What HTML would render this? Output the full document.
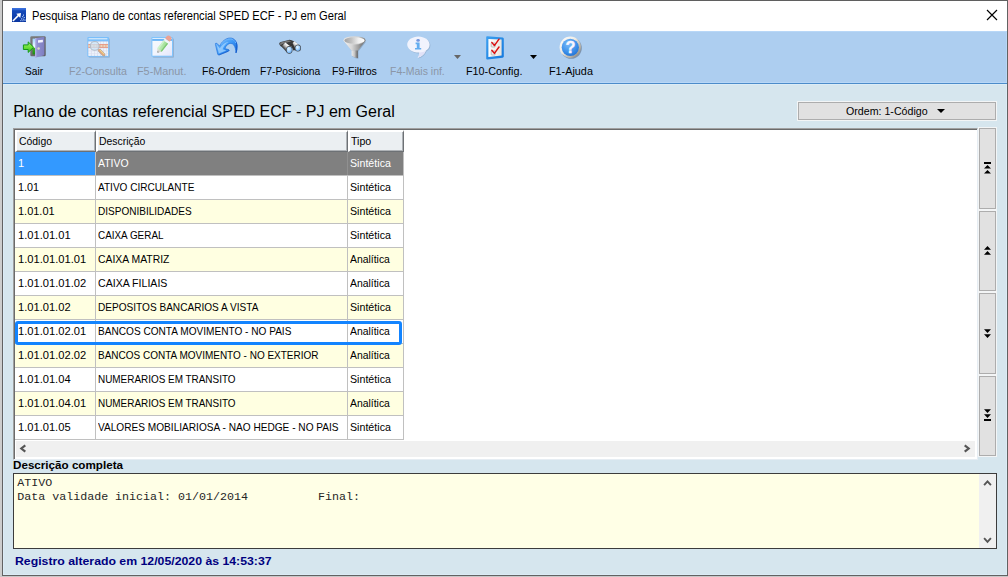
<!DOCTYPE html>
<html>
<head>
<meta charset="utf-8">
<title>Pesquisa Plano de contas referencial SPED ECF - PJ em Geral</title>
<style>
*{box-sizing:border-box;margin:0;padding:0}
html,body{width:1008px;height:577px;overflow:hidden}
body{position:relative;background:#d6e6ee;font-family:"Liberation Sans",sans-serif;font-size:11px;color:#000}
.a{position:absolute}
.t{position:absolute;white-space:pre;transform-origin:0 50%;display:block}
svg{position:absolute;overflow:visible}
/* window frame */
#fl{left:0;top:0;width:2px;height:577px;background:#cdcdcd}
#fl2{left:2px;top:0;width:1px;height:576px;background:#626262}
#ft{left:2px;top:0;width:1006px;height:1px;background:#5f5f5f}
#fr{left:1007px;top:0;width:1px;height:576px;background:#626262}
#fb{left:2px;top:575px;width:1006px;height:1px;background:#626262}
#fb2{left:0;top:576px;width:1008px;height:1px;background:#c8c8c8}
/* title bar + toolbar */
#title{left:3px;top:1px;width:1004px;height:30px;background:#fff}
#tb{left:3px;top:31px;width:1004px;height:52px;background:#adcef0;box-shadow:inset 1px 1px 0 #b8d7f7,inset -1px -1px 0 #b8d7f7}
#tbl{left:3px;top:83px;width:1004px;height:1px;background:#4c8cca}
#cb{left:3px;top:84px;width:1004px;height:491px;box-shadow:inset 1px 1px 0 #dcecf6,inset -1px -1px 0 #dcecf6}
/* ordem button */
#ord{left:798px;top:102px;width:198px;height:18px;background:#e1e1e1;border:1px solid #adadad;box-shadow:0 0 0 1px #f3f5f6}
/* grid */
#grid{left:13px;top:128px;width:965px;height:332px;background:#fff;border-left:1px solid #a0a0a0;border-top:1px solid #a0a0a0;border-right:1px solid #e6edf3;border-bottom:1px solid #e6edf3;box-shadow:inset 1px 1px 0 #6b6b6b}
.hd{top:130px;height:22px;background:#ebeff2;border-left:2px solid #fff;border-top:2px solid #fff;border-right:1px solid #6d7175;border-bottom:1px solid #6d7175;box-shadow:inset -1px -1px 0 #aeb2b6}
.r{left:15px;width:388px;height:23px;background:#fff}
.r.y{background:#ffffe1}
.vl{top:152px;width:1px;height:288px;background:#c0c0c0}
.hl{left:15px;width:389px;height:1px;background:#c0c0c0}
#s1{left:15px;top:152px;width:80px;height:23px;background:#3399ff}
#s2{left:96px;top:152px;width:307px;height:23px;background:#808080}
#focus{left:15px;top:321px;width:387px;height:24px;border:3px solid #1284ff;border-radius:3px}
#hs{left:16px;top:441px;width:959px;height:16px;background:#f0f0f0}
/* nav buttons */
.nb{left:979px;width:17px;background:#e1e1e1;border:1px solid #adadad;box-shadow:0 0 0 1px #f3f5f6}
/* text area */
#ta{left:13px;top:473px;width:984px;height:76px;background:#ffffe6;border:1px solid #3c3c3c}
#tasb{left:979px;top:474px;width:17px;height:74px;background:#f0f0f0}
</style>
</head>
<body>
<div class="a" id="fl"></div><div class="a" id="fl2"></div><div class="a" id="ft"></div>
<div class="a" id="fr"></div><div class="a" id="fb"></div><div class="a" id="fb2"></div>
<div class="a" id="title"></div>
<div class="a" id="tb"></div><div class="a" id="tbl"></div><div class="a" id="cb"></div>
<div class="a" id="ord"></div>

<div class="a" id="grid"></div>
<div class="a hd" style="left:15px;width:81px"></div>
<div class="a hd" style="left:96px;width:252px"></div>
<div class="a hd" style="left:348px;width:56px"></div>
<div class="a r" style="top:152px"></div>
<div class="a r" style="top:176px"></div>
<div class="a r y" style="top:200px"></div>
<div class="a r" style="top:224px"></div>
<div class="a r y" style="top:248px"></div>
<div class="a r" style="top:272px"></div>
<div class="a r y" style="top:296px"></div>
<div class="a r" style="top:320px"></div>
<div class="a r y" style="top:344px"></div>
<div class="a r" style="top:368px"></div>
<div class="a r y" style="top:392px"></div>
<div class="a r" style="top:416px"></div>
<div class="a hl" style="top:175px"></div>
<div class="a hl" style="top:199px"></div>
<div class="a hl" style="top:223px"></div>
<div class="a hl" style="top:247px"></div>
<div class="a hl" style="top:271px"></div>
<div class="a hl" style="top:295px"></div>
<div class="a hl" style="top:319px"></div>
<div class="a hl" style="top:343px"></div>
<div class="a hl" style="top:367px"></div>
<div class="a hl" style="top:391px"></div>
<div class="a hl" style="top:415px"></div>
<div class="a hl" style="top:439px"></div>
<div class="a vl" style="left:95px"></div>
<div class="a vl" style="left:347px"></div>
<div class="a vl" style="left:403px"></div>

<div class="a" id="s1"></div><div class="a" id="s2"></div>
<div class="a" style="left:347px;top:152px;width:1px;height:23px;background:#909090"></div>
<div class="a" id="focus"></div>
<div class="a" id="hs"></div>

<div class="a nb" style="top:128px;height:81px"></div>
<div class="a nb" style="top:211px;height:80px"></div>
<div class="a nb" style="top:293px;height:81px"></div>
<div class="a nb" style="top:376px;height:80px"></div>

<div class="a" id="ta"></div>
<div class="a" id="tasb"></div>

<!-- window close X -->
<svg style="left:987px;top:10px" width="11" height="11" viewBox="0 0 11 11"><path d="M0 0 L10 10 M10 0 L0 10" stroke="#000" stroke-width="1.15" fill="none"/></svg>
<!-- ordem dropdown arrow -->
<svg style="left:937px;top:109px" width="8" height="4" viewBox="0 0 8 4"><path d="M0 0 H8 L4 4 Z" fill="#000"/></svg>
<!-- toolbar dropdown arrows -->
<svg style="left:454px;top:55px" width="7" height="4" viewBox="0 0 7 4"><path d="M0 0 H7 L3.5 4 Z" fill="#666"/></svg>
<svg style="left:530px;top:55px" width="7" height="4" viewBox="0 0 7 4"><path d="M0 0 H7 L3.5 4 Z" fill="#000"/></svg>
<!-- hscroll arrows -->
<svg style="left:19px;top:444px" width="9" height="9" viewBox="0 0 9 9"><path d="M6.3 1.3 L2.3 4.5 L6.3 7.7" fill="none" stroke="#555" stroke-width="2.2"/></svg>
<svg style="left:962px;top:444px" width="9" height="9" viewBox="0 0 9 9"><path d="M2.7 1.3 L6.7 4.5 L2.7 7.7" fill="none" stroke="#555" stroke-width="2.2"/></svg>
<!-- textarea scroll arrows -->
<svg style="left:983px;top:479px" width="9" height="9" viewBox="0 0 9 9"><path d="M1.1 6.1 L4.5 2.4 L7.9 6.1" fill="none" stroke="#555" stroke-width="1.9"/></svg>
<svg style="left:983px;top:535px" width="9" height="9" viewBox="0 0 9 9"><path d="M1.1 3.1 L4.5 6.8 L7.9 3.1" fill="none" stroke="#555" stroke-width="1.9"/></svg>
<!-- app icon -->
<svg style="left:12px;top:8px" width="14" height="14" viewBox="0 0 14 14">
<defs><linearGradient id="gApp" x1="0" y1="0" x2="0" y2="1"><stop offset="0" stop-color="#2c62d0"/><stop offset=".25" stop-color="#1448b8"/><stop offset="1" stop-color="#0a36a0"/></linearGradient></defs>
<rect x="0" y="0" width="14" height="14" fill="url(#gApp)"/>
<rect x="0" y="0" width="14" height="1.6" fill="#3a70dc"/>
<path d="M0.9 13 L7 6.9" stroke="#fff" stroke-width="1.5" fill="none"/>
<path d="M4.3 5.7 L9 5 L8.3 10.1 Z" fill="#fff"/>
<g fill="#8fb0ea"><rect x="11" y="6.4" width="1" height="1.6"/><rect x="10" y="8" width="1.2" height="1.2"/><rect x="11.6" y="9" width="1.4" height="1"/><rect x="9" y="10.2" width="1.4" height="1.4"/><rect x="11" y="10.6" width="1.2" height="1.2"/><rect x="12.4" y="11.4" width="1.2" height="1.6"/><rect x="8.2" y="12" width="1.2" height="1.2"/><rect x="10.2" y="12.2" width="1.4" height="1"/></g>
</svg>
<!-- nav icons -->
<svg style="left:984px;top:162px" width="7" height="12" viewBox="0 0 7 12"><path d="M0 0 H7 V2 H0 Z M3.5 3 L7 6.6 H0 Z M3.5 8 L7 11.6 H0 Z" fill="#000"/></svg>
<svg style="left:984px;top:246px" width="7" height="9" viewBox="0 0 7 9"><path d="M3.5 0 L7 3.8 H0 Z M3.5 5 L7 8.8 H0 Z" fill="#000"/></svg>
<svg style="left:984px;top:329px" width="7" height="9" viewBox="0 0 7 9"><path d="M0 0.2 H7 L3.5 4 Z M0 5.2 H7 L3.5 9 Z" fill="#000"/></svg>
<svg style="left:984px;top:409px" width="7" height="12" viewBox="0 0 7 12"><path d="M0 0.2 H7 L3.5 4 Z M0 5.2 H7 L3.5 9 Z M0 10 H7 V12 H0 Z" fill="#000"/></svg>

<svg style="left:0;top:0" width="1008" height="100" viewBox="0 0 1008 100">
<defs>
<linearGradient id="gDoor" x1="0" y1="0" x2="1" y2="0"><stop offset="0" stop-color="#a3a3de"/><stop offset=".25" stop-color="#8f8fd0"/><stop offset="1" stop-color="#7f7fc0"/></linearGradient>
<linearGradient id="gSky" x1="0" y1="0" x2="0" y2="1"><stop offset="0" stop-color="#9ed6ff"/><stop offset=".55" stop-color="#f4fbff"/><stop offset=".6" stop-color="#3cae2a"/><stop offset="1" stop-color="#1f8f14"/></linearGradient>
<linearGradient id="gArr" x1="0" y1="0" x2="0" y2="1"><stop offset="0" stop-color="#a4f070"/><stop offset=".5" stop-color="#6fe03c"/><stop offset="1" stop-color="#3cc420"/></linearGradient>
<linearGradient id="gFrame" x1="0" y1="0" x2="1" y2="1"><stop offset="0" stop-color="#7d7d7d"/><stop offset="1" stop-color="#5a5a5a"/></linearGradient>
<linearGradient id="gUndo" x1="0" y1="0" x2="1" y2="1"><stop offset="0" stop-color="#8cc8ff"/><stop offset=".5" stop-color="#3c98f6"/><stop offset="1" stop-color="#0a5ad0"/></linearGradient>
<linearGradient id="gFun" x1="0" y1="0" x2="1" y2="0"><stop offset="0" stop-color="#f4f4f4"/><stop offset=".45" stop-color="#d9d9d9"/><stop offset="1" stop-color="#7e7e7e"/></linearGradient>
<linearGradient id="gFunIn" x1="0" y1="0" x2="1" y2="0"><stop offset="0" stop-color="#a2a2a2"/><stop offset=".35" stop-color="#c2c2c2"/><stop offset=".7" stop-color="#f0f0f0"/><stop offset="1" stop-color="#ffffff"/></linearGradient>
<radialGradient id="gLens" cx=".4" cy=".35" r=".7"><stop offset="0" stop-color="#e8f6ff"/><stop offset=".6" stop-color="#9ccfff"/><stop offset="1" stop-color="#5c9be0"/></radialGradient>
<linearGradient id="gBar" x1="0" y1="0" x2="1" y2="0"><stop offset="0" stop-color="#5a5a5a"/><stop offset=".45" stop-color="#f2f2f2"/><stop offset="1" stop-color="#8a8a8a"/></linearGradient>
<radialGradient id="gHelp" cx=".4" cy=".3" r=".8"><stop offset="0" stop-color="#7cbcf8"/><stop offset=".6" stop-color="#3c90ea"/><stop offset="1" stop-color="#1c6cd0"/></radialGradient>
<linearGradient id="gRing" x1="0" y1="0" x2="1" y2="1"><stop offset="0" stop-color="#ffffff"/><stop offset=".42" stop-color="#eeebe4"/><stop offset=".72" stop-color="#b6b2a8"/><stop offset="1" stop-color="#74706a"/></linearGradient>
<linearGradient id="gChk" x1="0" y1="0" x2="1" y2="1"><stop offset="0" stop-color="#3ca0f0"/><stop offset="1" stop-color="#1478dc"/></linearGradient>
<linearGradient id="gPaper" x1="0" y1="0" x2="1" y2="0"><stop offset="0" stop-color="#ffffff"/><stop offset="1" stop-color="#ece4dc"/></linearGradient>
<linearGradient id="gPen" x1="0" y1="0" x2="1" y2="1"><stop offset="0" stop-color="#ccf6bc"/><stop offset="1" stop-color="#94dc7e"/></linearGradient>
<linearGradient id="gWin" x1="0" y1="0" x2="1" y2="1"><stop offset="0" stop-color="#ffffff"/><stop offset=".5" stop-color="#fbfaff"/><stop offset="1" stop-color="#eeeafc"/></linearGradient>
<linearGradient id="gBarL" gradientUnits="userSpaceOnUse" x1="289.4" y1="44.4" x2="283.6" y2="50"><stop offset="0" stop-color="#8c8c8c"/><stop offset=".22" stop-color="#ffffff"/><stop offset=".5" stop-color="#c4c4c4"/><stop offset=".8" stop-color="#4a4a4a"/><stop offset="1" stop-color="#2e2e2e"/></linearGradient>
<linearGradient id="gBarR" gradientUnits="userSpaceOnUse" x1="298" y1="43" x2="292.6" y2="48.2"><stop offset="0" stop-color="#8c8c8c"/><stop offset=".22" stop-color="#ffffff"/><stop offset=".5" stop-color="#c4c4c4"/><stop offset=".8" stop-color="#4a4a4a"/><stop offset="1" stop-color="#2e2e2e"/></linearGradient>
<linearGradient id="gCone" gradientUnits="userSpaceOnUse" x1="344" y1="0" x2="365" y2="0"><stop offset="0" stop-color="#f4f4f4"/><stop offset=".38" stop-color="#d6d6d6"/><stop offset=".68" stop-color="#a0a0a0"/><stop offset="1" stop-color="#646464"/></linearGradient>
<linearGradient id="gSpout" gradientUnits="userSpaceOnUse" x1="351.6" y1="0" x2="357.8" y2="0"><stop offset="0" stop-color="#ececec"/><stop offset=".45" stop-color="#c8c8c8"/><stop offset="1" stop-color="#5e5e5e"/></linearGradient>
<linearGradient id="gRim" gradientUnits="userSpaceOnUse" x1="343.4" y1="0" x2="365.6" y2="0"><stop offset="0" stop-color="#e4e4e4"/><stop offset=".7" stop-color="#d0d0d0"/><stop offset="1" stop-color="#7c7c7c"/></linearGradient>
</defs>

<!-- 1: Sair -->
<g>
<rect x="30.3" y="36.3" width="15.4" height="20" rx="1.2" fill="url(#gFrame)"/>
<rect x="32.6" y="38.6" width="11" height="15.8" fill="url(#gSky)"/>
<path d="M35.2 38.2 L44.4 36.8 L44.4 55.2 L35.2 57.8 Z" fill="url(#gDoor)"/>
<path d="M35.2 38.2 L36.2 38.05 L36.2 57.5 L35.2 57.8 Z" fill="#b4b4e8"/>
<path d="M38 40.3 L42.9 39.7 L42.9 42.2 L38 42.7 Z" fill="#f4f4ff"/>
<circle cx="38.6" cy="48.4" r="1.25" fill="#d9d8c8"/>
<path d="M23.4 44.9 H28.2 V41.9 L33.6 47.2 L28.2 52.4 V49.5 H23.4 Z" fill="url(#gArr)" stroke="#149a14" stroke-width="1" stroke-linejoin="round"/>
</g>

<!-- 2: F2-Consulta (disabled) -->
<g opacity=".78">
<rect x="88.8" y="38.4" width="21.2" height="19.3" rx="1" fill="#7088a4" opacity=".45"/>
<rect x="87.4" y="37" width="21.6" height="19.7" rx="1" fill="#6cbcff"/>
<rect x="88.6" y="38.3" width="18.8" height="1" fill="#fff"/>
<rect x="88.3" y="41.4" width="19.8" height="14.4" fill="#e9e0ee"/>
<g fill="#fff">
<rect x="88.6" y="41.8" width="2.3" height="2"/><rect x="91.7" y="41.8" width="2.3" height="2"/><rect x="94.7" y="41.8" width="2.3" height="2"/><rect x="97.7" y="41.8" width="2.3" height="2"/><rect x="100.7" y="41.8" width="2.3" height="2"/><rect x="103.7" y="41.8" width="2.3" height="2"/><rect x="106.6" y="41.8" width="1.5" height="2"/>
<rect x="88.6" y="48.4" width="2.3" height="2.2"/><rect x="91.7" y="48.4" width="2.3" height="2.2"/><rect x="94.7" y="48.4" width="2.3" height="2.2"/><rect x="97.7" y="48.4" width="2.3" height="2.2"/><rect x="100.7" y="48.4" width="2.3" height="2.2"/><rect x="103.7" y="48.4" width="2.3" height="2.2"/><rect x="106.6" y="48.4" width="1.5" height="2.2"/>
<rect x="88.6" y="51.3" width="2.3" height="2.2"/><rect x="91.7" y="51.3" width="2.3" height="2.2"/><rect x="94.7" y="51.3" width="2.3" height="2.2"/><rect x="97.7" y="51.3" width="2.3" height="2.2"/><rect x="100.7" y="51.3" width="2.3" height="2.2"/><rect x="103.7" y="51.3" width="2.3" height="2.2"/><rect x="106.6" y="51.3" width="1.5" height="2.2"/>
<rect x="88.6" y="54.1" width="2.3" height="1.7"/><rect x="91.7" y="54.1" width="2.3" height="1.7"/><rect x="94.7" y="54.1" width="2.3" height="1.7"/><rect x="97.7" y="54.1" width="2.3" height="1.7"/><rect x="100.7" y="54.1" width="2.3" height="1.7"/><rect x="103.7" y="54.1" width="2.3" height="1.7"/><rect x="106.6" y="54.1" width="1.5" height="1.7"/>
</g>
<rect x="88.3" y="44" width="19.8" height="3.9" fill="#f68c68"/>
<g fill="#fcd8ae">
<rect x="88.4" y="44.9" width="1.8" height="2.1"/><rect x="91.4" y="44.9" width="2.1" height="2.1"/><rect x="94.4" y="44.9" width="2.1" height="2.1"/><rect x="97.4" y="44.9" width="2.1" height="2.1"/><rect x="100.4" y="44.9" width="2.1" height="2.1"/><rect x="103.4" y="44.9" width="2.1" height="2.1"/><rect x="106.3" y="44.9" width="1.7" height="2.1"/>
</g>
<circle cx="94.7" cy="45.9" r="4.4" fill="#d4eefc" fill-opacity=".7" stroke="#b4b8bc" stroke-width="1.1"/>
<path d="M99.5 50.5 L103.8 54.8" stroke="#b09c88" stroke-width="3.3" stroke-linecap="round"/>
<path d="M99.4 50.3 L103.6 54.5" stroke="#f9a25c" stroke-width="2.3" stroke-linecap="round"/>
<path d="M100 50 L104.2 54.2" stroke="#ffe27a" stroke-width=".9"/>
</g>

<!-- 3: F5-Manut. (disabled) -->
<g opacity=".88">
<rect x="152.8" y="38.4" width="21.2" height="19.3" rx="1" fill="#7088a4" opacity=".45"/>
<rect x="151.4" y="37" width="21.6" height="19.7" rx="1" fill="#7cc4ff"/>
<rect x="152.4" y="40.9" width="19.6" height="14.8" fill="url(#gWin)"/>
<rect x="152.4" y="38" width="19.6" height=".9" fill="#eef7ff"/>
<rect x="152.6" y="39" width="19.2" height="1.6" fill="#62b0f6"/>
<g transform="translate(157.4 52.7) rotate(-51.7)">
<path d="M0 0 L3.4 -2.6 L3.4 2.6 Z" fill="#ddd6c8"/>
<path d="M0 0 L1.5 -1.1 L1.5 1.1 Z" fill="#8a8a8a"/>
<rect x="3.4" y="-2.8" width="10.4" height="5.6" fill="url(#gPen)"/>
<rect x="3.4" y="-2.8" width="10.4" height="1.5" fill="#d4f8c8"/>
<rect x="3.4" y="1.5" width="10.4" height="1.3" fill="#78c864"/>
<rect x="13.8" y="-2.9" width="2.3" height="5.8" fill="#fafafa"/>
<path d="M16.1 -2.9 H18 A2.9 2.9 0 0 1 18 2.9 H16.1 Z" fill="#f49c88"/>
</g>
</g>

<!-- 4: F6-Ordem -->
<g>
<path d="M216 43.1 Q217 42.9 219.5 46.2 C221.7 41.7 225.7 38 230.2 38 C234.4 38 237.1 41.6 237.1 46.2 C237.1 48.8 236.8 51 236 53 C235.8 50 235.2 46.6 233.6 44.8 C232.2 43.2 229.6 42.8 227.8 44.4 C226.4 45.6 225.4 47 224.8 48.6 L228.6 49.6 Q229.6 50.6 228.4 51.2 L219 55 Q217.9 55.2 217.7 54.1 L215.4 44.3 Q215.2 43.3 216 43.1 Z" fill="url(#gUndo)" stroke="#1468d8" stroke-width=".6" stroke-linejoin="round"/>
<path d="M216.9 45 L218.8 53.4 L226.4 50.4 L222.6 49.2 C223.4 46.6 225.6 43.4 228.8 42 C226.4 41.4 222.4 43.8 219.8 48.2 Z" fill="#a4d4ff" opacity=".75"/>
<path d="M233.4 39.6 C235.8 41 237 43.4 237 46.2 C237 48.8 236.7 50.8 236 52.8" fill="none" stroke="#0a4cc0" stroke-width=".9" opacity=".75"/>
<path d="M219.2 54.9 L228.4 51.2 Q229.4 50.6 228.6 49.8" fill="none" stroke="#0a4cc0" stroke-width=".8" opacity=".6"/>
<path d="M221 44.6 C223.4 41 226.8 39 230.2 39 C233 39 235 40.6 235.8 43" fill="none" stroke="#6cb4fc" stroke-width="1"/>
</g>

<!-- 5: F7-Posiciona -->
<g>
<path d="M279.2 44 Q279 42.4 280.8 41.9 L288.6 39.9 Q290.2 39.6 291.6 40.3 L296.4 42.6 L292 46.4 L286 45 L283 47.4 Q279.8 46.6 279.2 44 Z" fill="#3a3a3a"/>
<path d="M280.2 43 Q280.6 42.4 281.6 42.2 L288.8 40.5 L291.4 41.3 L283 43.7 Q281 44.2 280.6 45.6 Q280 44.4 280.2 43 Z" fill="#7a7a7a"/>
<path d="M285.4 42.6 L291.6 47.2 L287 52.4 L281.4 46.4 Z" fill="url(#gBarL)"/>
<path d="M294.4 41.2 L300 45.8 L295.8 50.4 L290.6 45 Z" fill="url(#gBarR)"/>
<path d="M290.6 44.2 L292.6 43 L295.6 50 L293.4 50.6 Z" fill="#333"/>
<ellipse cx="289.3" cy="49.9" rx="3.2" ry="3.8" fill="#444"/>
<ellipse cx="289.3" cy="49.9" rx="2.6" ry="3.2" fill="url(#gLens)"/>
<ellipse cx="297.9" cy="48.1" rx="3.1" ry="3.5" fill="#444"/>
<ellipse cx="297.9" cy="48.1" rx="2.5" ry="2.9" fill="url(#gLens)"/>
</g>

<!-- 6: F9-Filtros -->
<g>
<path d="M344.4 41.4 L352.4 51.6 L352.4 56.6 Q355.4 59 358.4 58.6 L358.4 51.4 L366.2 41.4 Z" fill="#6a7c90" opacity=".45"/>
<path d="M343.4 40.4 L351.6 50.8 L357.8 50.8 L365.6 40.4 Z" fill="url(#gCone)"/>
<path d="M351.6 50.6 L351.6 55.6 Q354.4 58.3 357.8 58 L357.8 50.6 Z" fill="url(#gSpout)"/>
<ellipse cx="354.5" cy="40.3" rx="11.1" ry="4.15" fill="url(#gRim)"/>
<ellipse cx="354.5" cy="40.5" rx="10.1" ry="3.3" fill="url(#gFunIn)"/>
</g>

<!-- 7: F4-Mais inf. (disabled) -->
<g opacity=".9">
<path d="M419.2 37.2 C425.4 37.2 430.4 40.8 430.4 45.3 C430.4 48 428.8 50.2 426.4 51.6 C425.4 54.8 422.6 57.6 418.2 58.6 C419.8 56.8 420.2 55 419.8 53.4 C413.2 53.6 408 49.8 408 45.3 C408 40.8 413 37.2 419.2 37.2 Z" fill="#7088a4" opacity=".4"/>
<path d="M418.4 36.4 C424.6 36.4 429.6 40 429.6 44.5 C429.6 47.2 428.2 49.4 425.8 50.8 C424.8 54 422 56.8 417.6 57.8 C419.2 56 419.6 54.2 419.2 52.6 C412.6 52.8 407.2 49 407.2 44.5 C407.2 40 412.2 36.4 418.4 36.4 Z" fill="#f9f8ff"/>
<path d="M425.8 50.8 C424.8 54 422 56.8 417.6 57.8 C419.2 56 419.6 54.2 419.2 52.6 C422 52.4 424.2 51.8 425.8 50.8 Z" fill="#e6e4f8"/>
<ellipse cx="418.1" cy="40.4" rx="1.8" ry="1.3" fill="#6c90dc"/>
<path d="M415.6 42.6 H419.6 V48 H421.2 V49.6 H415 V48 H416.8 V44.2 H415.6 Z" fill="#5caaf0"/>
</g>

<!-- 8: F10-Config. -->
<g>
<path d="M486.2 37 Q486.2 36 487.4 36.2 L502.8 37.6 Q503.8 37.8 503.8 38.8 L503.8 56.6 Q503.8 57.6 502.6 57.8 L487.6 59.4 Q486.2 59.6 486.2 58.4 Z" fill="url(#gChk)"/>
<path d="M488.4 39 L501.6 39.6 L501.6 55.6 L488.4 57 Z" fill="url(#gPaper)"/>
<rect x="491.2" y="43" width="4" height="4" rx=".6" fill="#f0f0f0" stroke="#a4a4a4" stroke-width=".7"/>
<rect x="491.2" y="51" width="4" height="4" rx=".6" fill="#f0f0f0" stroke="#a4a4a4" stroke-width=".7"/>
<path d="M491.8 42.4 L494.4 45.6 L499 39.2" fill="none" stroke="#dc1010" stroke-width="1.45" stroke-linejoin="round" stroke-linecap="round"/>
<path d="M491.8 50.2 L494.4 53.4 L499 47" fill="none" stroke="#dc1010" stroke-width="1.45" stroke-linejoin="round" stroke-linecap="round"/>
</g>

<!-- 9: F1-Ajuda -->
<g>
<circle cx="571.1" cy="48.1" r="10.7" fill="#5c6c84" opacity=".6"/>
<circle cx="570.3" cy="47.3" r="10.7" fill="url(#gRing)"/>
<circle cx="570.3" cy="47.3" r="8.6" fill="url(#gHelp)"/>
<text transform="translate(570.5 53.1) scale(1 1)" font-family="Liberation Sans" font-weight="bold" font-size="16.3" stroke="#f8f6ff" stroke-width=".35" fill="#f8f6ff" text-anchor="middle">?</text>
</g>
</svg>

<span class="t" style='left:32.4px;top:9.34px;font-size:12px;line-height:15px;color:#000;transform:scaleX(0.9276);'>Pesquisa Plano de contas referencial SPED ECF - PJ em Geral</span>
<span class="t" style='left:25.0px;top:64.19px;font-size:11px;line-height:14px;color:#000;transform:scaleX(0.9201);'>Sair</span>
<span class="t" style='left:69.2px;top:64.19px;font-size:11px;line-height:14px;color:#8b96a7;transform:scaleX(0.9679);'>F2-Consulta</span>
<span class="t" style='left:137.1px;top:64.19px;font-size:11px;line-height:14px;color:#8b96a7;transform:scaleX(0.9852);'>F5-Manut.</span>
<span class="t" style='left:202.3px;top:64.19px;font-size:11px;line-height:14px;color:#000;transform:scaleX(0.9576);'>F6-Ordem</span>
<span class="t" style='left:260.3px;top:64.19px;font-size:11px;line-height:14px;color:#000;transform:scaleX(0.9376);'>F7-Posiciona</span>
<span class="t" style='left:332.3px;top:64.19px;font-size:11px;line-height:14px;color:#000;transform:scaleX(0.9666);'>F9-Filtros</span>
<span class="t" style='left:390.3px;top:64.19px;font-size:11px;line-height:14px;color:#8b96a7;transform:scaleX(0.9536);'>F4-Mais inf.</span>
<span class="t" style='left:466.2px;top:64.19px;font-size:11px;line-height:14px;color:#000;transform:scaleX(0.9811);'>F10-Config.</span>
<span class="t" style='left:548.6px;top:64.19px;font-size:11px;line-height:14px;color:#000;transform:scaleX(0.9834);'>F1-Ajuda</span>
<span class="t" style='left:13.2px;top:101.71px;font-size:16px;line-height:20px;color:#000;'>Plano de contas referencial SPED ECF - PJ em Geral</span>
<span class="t" style='left:845.6px;top:104.19px;font-size:11px;line-height:14px;color:#000;transform:scaleX(0.9671);'>Ordem: 1-Código</span>
<span class="t" style='left:18.6px;top:134.19px;font-size:11px;line-height:14px;color:#000;transform:scaleX(0.9467);'>Código</span>
<span class="t" style='left:99.0px;top:134.19px;font-size:11px;line-height:14px;color:#000;transform:scaleX(0.9467);'>Descrição</span>
<span class="t" style='left:351.2px;top:134.19px;font-size:11px;line-height:14px;color:#000;transform:scaleX(0.9619);'>Tipo</span>
<span class="t" style='left:18.0px;top:156.19px;font-size:11px;line-height:14px;color:#fff;transform:scaleX(1.0122);'>1</span>
<span class="t" style='left:97.6px;top:156.19px;font-size:11px;line-height:14px;color:#fff;transform:scaleX(0.9502);'>ATIVO</span>
<span class="t" style='left:349.6px;top:156.19px;font-size:11px;line-height:14px;color:#fff;transform:scaleX(0.9691);'>Sintética</span>
<span class="t" style='left:18.0px;top:180.19px;font-size:11px;line-height:14px;color:#000;transform:scaleX(0.9803);'>1.01</span>
<span class="t" style='left:97.6px;top:180.19px;font-size:11px;line-height:14px;color:#000;transform:scaleX(0.9135);'>ATIVO CIRCULANTE</span>
<span class="t" style='left:349.6px;top:180.19px;font-size:11px;line-height:14px;color:#000;transform:scaleX(0.9691);'>Sintética</span>
<span class="t" style='left:18.0px;top:204.19px;font-size:11px;line-height:14px;color:#000;transform:scaleX(0.9972);'>1.01.01</span>
<span class="t" style='left:97.6px;top:204.19px;font-size:11px;line-height:14px;color:#000;transform:scaleX(0.9114);'>DISPONIBILIDADES</span>
<span class="t" style='left:349.6px;top:204.19px;font-size:11px;line-height:14px;color:#000;transform:scaleX(0.9691);'>Sintética</span>
<span class="t" style='left:18.0px;top:228.19px;font-size:11px;line-height:14px;color:#000;transform:scaleX(1.0115);'>1.01.01.01</span>
<span class="t" style='left:97.6px;top:228.19px;font-size:11px;line-height:14px;color:#000;transform:scaleX(0.9002);'>CAIXA GERAL</span>
<span class="t" style='left:349.6px;top:228.19px;font-size:11px;line-height:14px;color:#000;transform:scaleX(0.9691);'>Sintética</span>
<span class="t" style='left:18.0px;top:252.19px;font-size:11px;line-height:14px;color:#000;transform:scaleX(1.0149);'>1.01.01.01.01</span>
<span class="t" style='left:97.6px;top:252.19px;font-size:11px;line-height:14px;color:#000;transform:scaleX(0.9445);'>CAIXA MATRIZ</span>
<span class="t" style='left:349.6px;top:252.19px;font-size:11px;line-height:14px;color:#000;transform:scaleX(0.9454);'>Analítica</span>
<span class="t" style='left:18.0px;top:276.19px;font-size:11px;line-height:14px;color:#000;transform:scaleX(1.0149);'>1.01.01.01.02</span>
<span class="t" style='left:97.6px;top:276.19px;font-size:11px;line-height:14px;color:#000;transform:scaleX(0.9620);'>CAIXA FILIAIS</span>
<span class="t" style='left:349.6px;top:276.19px;font-size:11px;line-height:14px;color:#000;transform:scaleX(0.9454);'>Analítica</span>
<span class="t" style='left:18.0px;top:300.19px;font-size:11px;line-height:14px;color:#000;transform:scaleX(1.0115);'>1.01.01.02</span>
<span class="t" style='left:97.6px;top:300.19px;font-size:11px;line-height:14px;color:#000;transform:scaleX(0.9163);'>DEPOSITOS BANCARIOS A VISTA</span>
<span class="t" style='left:349.6px;top:300.19px;font-size:11px;line-height:14px;color:#000;transform:scaleX(0.9691);'>Sintética</span>
<span class="t" style='left:18.0px;top:324.19px;font-size:11px;line-height:14px;color:#000;transform:scaleX(1.0149);'>1.01.01.02.01</span>
<span class="t" style='left:97.6px;top:324.19px;font-size:11px;line-height:14px;color:#000;transform:scaleX(0.9172);'>BANCOS CONTA MOVIMENTO - NO PAIS</span>
<span class="t" style='left:349.6px;top:324.19px;font-size:11px;line-height:14px;color:#000;transform:scaleX(0.9454);'>Analítica</span>
<span class="t" style='left:18.0px;top:348.19px;font-size:11px;line-height:14px;color:#000;transform:scaleX(1.0149);'>1.01.01.02.02</span>
<span class="t" style='left:97.6px;top:348.19px;font-size:11px;line-height:14px;color:#000;transform:scaleX(0.9080);'>BANCOS CONTA MOVIMENTO - NO EXTERIOR</span>
<span class="t" style='left:349.6px;top:348.19px;font-size:11px;line-height:14px;color:#000;transform:scaleX(0.9454);'>Analítica</span>
<span class="t" style='left:18.0px;top:372.19px;font-size:11px;line-height:14px;color:#000;transform:scaleX(1.0115);'>1.01.01.04</span>
<span class="t" style='left:97.6px;top:372.19px;font-size:11px;line-height:14px;color:#000;transform:scaleX(0.9023);'>NUMERARIOS EM TRANSITO</span>
<span class="t" style='left:349.6px;top:372.19px;font-size:11px;line-height:14px;color:#000;transform:scaleX(0.9691);'>Sintética</span>
<span class="t" style='left:18.0px;top:396.19px;font-size:11px;line-height:14px;color:#000;transform:scaleX(1.0149);'>1.01.01.04.01</span>
<span class="t" style='left:97.6px;top:396.19px;font-size:11px;line-height:14px;color:#000;transform:scaleX(0.9023);'>NUMERARIOS EM TRANSITO</span>
<span class="t" style='left:349.6px;top:396.19px;font-size:11px;line-height:14px;color:#000;transform:scaleX(0.9454);'>Analítica</span>
<span class="t" style='left:18.0px;top:420.19px;font-size:11px;line-height:14px;color:#000;transform:scaleX(1.0115);'>1.01.01.05</span>
<span class="t" style='left:97.6px;top:420.19px;font-size:11px;line-height:14px;color:#000;transform:scaleX(0.9189);'>VALORES MOBILIARIOSA - NAO HEDGE - NO PAIS</span>
<span class="t" style='left:349.6px;top:420.19px;font-size:11px;line-height:14px;color:#000;transform:scaleX(0.9691);'>Sintética</span>
<span class="t" style='left:13.4px;top:458.19px;font-size:11px;line-height:14px;color:#000;font-weight:bold;transform:scaleX(1.0583);'>Descrição completa</span>
<span class="t" style='left:15.4px;top:553.52px;font-size:11.5px;line-height:15px;color:#000080;font-weight:bold;transform:scaleX(1.0675);'>Registro alterado em 12/05/2020 às 14:53:37</span>
<span class="t" style='left:17.2px;top:476.39px;font-size:11.667px;line-height:15px;color:#262626;font-family:"Liberation Mono",monospace;'>ATIVO</span>
<span class="t" style='left:17.2px;top:490.39px;font-size:11.667px;line-height:15px;color:#262626;font-family:"Liberation Mono",monospace;'>Data validade inicial: 01/01/2014          Final:</span>
</body>
</html>
